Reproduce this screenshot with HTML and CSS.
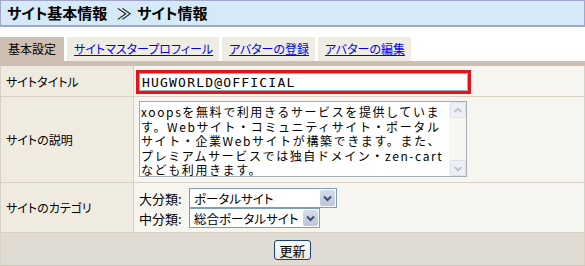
FILE: index.html
```html
<!DOCTYPE html>
<html lang="ja">

<head>
    <meta charset="UTF-8">
    <title>サイト情報</title>
    <link rel="stylesheet" href="styles.css">
</head>

<body>
    <div class="page_title">サイト基本情報 <span class="sep">≫</span> サイト情報</div>

    <ul class="tabs">
        <li class="tab active">基本設定</li>
        <li class="tab"><a href="#">サイトマスタープロフィール</a></li>
        <li class="tab"><a href="#">アバターの登録</a></li>
        <li class="tab"><a href="#">アバターの編集</a></li>
    </ul>

    <form class="site_form">
        <table class="form_table">
            <tr class="row_title">
                <th>サイトタイトル</th>
                <td><input type="text" class="text_field" value="HUGWORLD@OFFICIAL" /></td>
            </tr>
            <tr class="row_desc">
                <th>サイトの説明</th>
                <td>
                    <div class="area_box">
                        <textarea class="area_field">xoopsを無料で利用きるサービスを提供していま
す。Webサイト・コミュニティサイト・ポータル
サイト・企業Webサイトが構築できます。また、
プレミアムサービスでは独自ドメイン・zen-cart
なども利用きます。</textarea>
                        <div class="scroll">
                            <span class="scroll_btn">
                                <svg width="15" height="15" viewBox="0 0 15 15"><polyline points="4,9 7.5,5.5 11,9" fill="none" stroke="#b9c0d0" stroke-width="2"/></svg>
                            </span>
                            <span class="scroll_track"></span>
                            <span class="scroll_btn">
                                <svg width="15" height="15" viewBox="0 0 15 15"><polyline points="4,6 7.5,9.5 11,6" fill="none" stroke="#b9c0d0" stroke-width="2"/></svg>
                            </span>
                        </div>
                    </div>
                </td>
            </tr>
            <tr class="row_cat">
                <th>サイトのカテゴリ</th>
                <td>
                    <div class="cat_line">
                        <label class="cat_label">大分類:</label>
                        <span class="combo combo_big">
                            <select class="combo_select">
                                <option>ポータルサイト</option>
                            </select>
                            <span class="combo_btn">
                                <svg width="9" height="7" viewBox="0 0 9 7"><polyline points="1,1.5 4.5,5 8,1.5" fill="none" stroke="#3c4d70" stroke-width="2"/></svg>
                            </span>
                        </span>
                    </div>
                    <div class="cat_line">
                        <label class="cat_label">中分類:</label>
                        <span class="combo combo_mid">
                            <select class="combo_select">
                                <option>総合ポータルサイト</option>
                            </select>
                            <span class="combo_btn">
                                <svg width="9" height="7" viewBox="0 0 9 7"><polyline points="1,1.5 4.5,5 8,1.5" fill="none" stroke="#3c4d70" stroke-width="2"/></svg>
                            </span>
                        </span>
                    </div>
                </td>
            </tr>
            <tr>
                <td colspan="2" class="foot"><button type="button" class="submit_btn">更新</button></td>
            </tr>
        </table>
    </form>
</body>

</html>
```

FILE: styles.css
```css
body {
    margin: 0;
    font-family: "Noto Sans CJK JP", sans-serif;
    font-size: 12px;
    color: #000;
    background: #fff;
    font-feature-settings: "palt";
}

.page_title {
    box-sizing: border-box;
    height: 27px;
    padding-left: 6px;
    border: 1px solid #a2a7cc;
    border-bottom-width: 2px;
    background: #d5eaf6;
    font-size: 15px;
    font-weight: 700;
    line-height: 23px;
}

.page_title .sep {
    font-weight: 400;
    padding: 0 2px 0 6px;
}

.tabs {
    display: flex;
    gap: 3px;
    margin: 10px 0 0;
    padding: 0;
    list-style: none;
    border-bottom: 5px solid #cdbfb3;
}

.tab {
    height: 24px;
    padding: 0 6px 0 7px;
    line-height: 24px;
    background: #efede3;
}

.tab.active {
    padding: 0 8px;
    background: #cdbfb3;
}

.tab a {
    color: #0000ee;
    text-decoration: underline;
}

.site_form {
    margin: 0;
}

.form_table {
    width: 585px;
    border-collapse: collapse;
    table-layout: fixed;
}

.form_table th,
.form_table td {
    border: 1px solid #d8d0c5;
}

.form_table tr:first-child > * {
    border-top: 0;
}

.form_table th {
    width: 127px;
    padding: 0 0 0 5px;
    background: #efebe1;
    font-weight: 400;
    text-align: left;
    vertical-align: middle;
}

.form_table td {
    padding: 0 5px;
    background: #f7f5ef;
}

.row_title td {
    padding-top: 7px;
    padding-bottom: 5px;
}

.text_field {
    display: block;
    box-sizing: border-box;
    width: 329px;
    height: 18px;
    margin: 0;
    padding: 0 2px;
    border: 1px solid #a5acb2;
    outline: 3px solid #e5141c;
    font-family: "DejaVu Sans Mono", monospace;
    font-size: 13px;
    letter-spacing: 1.2px;
    color: #000;
    background: #fff;
}

.row_desc td {
    padding-top: 4px;
    padding-bottom: 5px;
}

.area_box {
    display: flex;
    box-sizing: border-box;
    width: 328px;
    height: 76px;
    border: 1px solid #a5acb2;
    background: #fff;
}

.area_field {
    flex: 1;
    margin: 0;
    padding: 3px 1px 0;
    border: 0;
    resize: none;
    overflow: hidden;
    white-space: pre;
    font-family: "Noto Sans CJK JP", sans-serif;
    font-size: 12px;
    line-height: 14.5px;
    letter-spacing: 1.6px;
    font-feature-settings: normal;
    color: #000;
    background: #fff;
}

.scroll {
    display: flex;
    flex-direction: column;
    width: 17px;
    background: #f6f6f2;
}

.scroll_btn {
    display: flex;
    box-sizing: border-box;
    width: 16px;
    height: 16px;
    margin: 0 0 0 1px;
    border: 1px solid #dfe2ea;
    border-radius: 2px;
    background: #eef0f5;
}

.scroll_track {
    flex: 1;
}

.row_cat td {
    padding-top: 5px;
    padding-bottom: 4px;
}

.cat_line {
    display: flex;
    align-items: center;
    height: 20px;
}

.cat_label {
    width: 50px;
    font-size: 13px;
}

.combo {
    display: inline-flex;
    box-sizing: border-box;
    height: 20px;
    border: 1px solid #7f9db9;
    background: #fff;
}

.combo_big {
    width: 148px;
}

.combo_mid {
    width: 131px;
}

.combo_select {
    flex: 1;
    min-width: 0;
    margin: 0;
    padding: 0 0 0 4px;
    border: 0;
    appearance: none;
    -webkit-appearance: none;
    background: #fff;
    font-family: "Noto Sans CJK JP", sans-serif;
    font-size: 12.5px;
    font-feature-settings: "palt";
    color: #000;
}

.combo_btn {
    display: flex;
    align-items: center;
    justify-content: center;
    width: 15px;
    margin: 1px;
    border-radius: 2px;
    background: linear-gradient(#d6dcec, #bcc5dc);
}

.form_table .foot {
    padding: 7px 0 5px;
    text-align: center;
    background: #e0dcd4;
    border-bottom-color: #cbc3b8;
}

.submit_btn {
    display: inline-block;
    width: 37px;
    height: 20px;
    padding: 0;
    border: 1px solid #1c3f76;
    border-radius: 3px;
    background: linear-gradient(#fdfdfb, #eae8e0);
    font-family: "Noto Sans CJK JP", sans-serif;
    font-size: 13px;
    line-height: 17px;
    vertical-align: top;
}
```
